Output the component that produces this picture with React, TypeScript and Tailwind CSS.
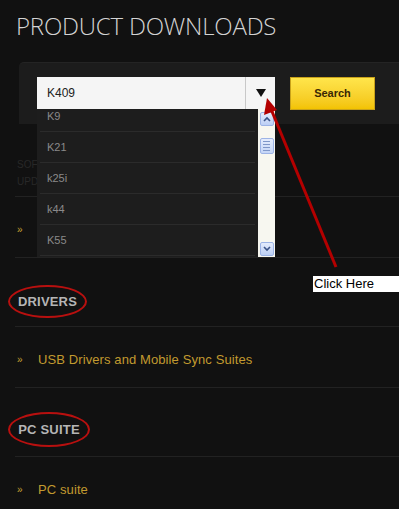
import React from 'react';

const sans = { fontFamily: "'Liberation Sans', Arial, sans-serif" };

const Chevron: React.FC<{ up?: boolean }> = ({ up }) => (
  <div className="w-[14px] h-[14px] rounded-[2px] border border-[#9db4e6] bg-gradient-to-b from-[#e4ecfc] to-[#bccff5] flex items-center justify-center">
    <svg width="8" height="6" viewBox="0 0 8 6">
      <path d={up ? 'M1 5 L4 2 L7 5' : 'M1 1 L4 4 L7 1'} fill="none" stroke="#3b5488" strokeWidth="1.6" />
    </svg>
  </div>
);

const ItemRow: React.FC<{ label?: string; last?: boolean }> = ({ label, last }) => (
  <div className={`h-[61px] pt-[5px] flex items-center ${last ? '' : 'border-b border-[#222222]'}`}>
    <span className="w-[23px] pl-[2px] text-[10px] leading-none text-[#c8a033]" style={sans}>»</span>
    {label && (
      <span className="text-[13px] tracking-[0.1px] text-[#c29a2f]" style={sans}>{label}</span>
    )}
  </div>
);

const Heading: React.FC<{ label: string; w: string; h: string; pt: string }> = ({ label, w, h, pt }) => (
  <div className={`h-[69px] border-b border-[#222222] ${pt}`}>
    <div className={`${w} ${h} -ml-[7px] rounded-[50%] border-2 border-[#b8100f] flex items-center justify-center`}>
      <span className="text-[13px] font-bold tracking-[0.2px] text-[#b5b5b5]" style={sans}>{label}</span>
    </div>
  </div>
);

export default function App() {
  const models = ['K9', 'K21', 'k25i', 'k44', 'K55'];
  return (
    <div className="relative w-[399px] h-[509px] overflow-hidden bg-[#111111]">
      <div className="h-[62px] pl-[16px] pt-[11px]">
        <h1
          className="text-[24px] leading-[30px] font-light tracking-[-0.2px] text-[#d4d4d4]"
          style={{ fontFamily: "'Open Sans', sans-serif" }}
        >
          PRODUCT DOWNLOADS
        </h1>
      </div>

      <div className="relative ml-[19px] h-[62px] rounded-tl-[5px] bg-[#1c1c1c] border-t border-[#242424] pt-[14px] pl-[18px] flex items-start gap-[15px]">
        <div className="w-[238px] h-[32px] bg-[#f5f5f5] flex">
          <div className="flex-1 flex items-center pl-[10px] text-[12px] text-[#222222]" style={sans}>K409</div>
          <div className="w-[30px] border-l border-[#c8c8c8] flex items-center justify-center">
            <svg width="10" height="8" viewBox="0 0 10 8">
              <path d="M0 0 H10 L5 8 Z" fill="#111111" />
            </svg>
          </div>
        </div>
        <button
          className="w-[85px] h-[33px] border border-[#c9a21a] bg-gradient-to-b from-[#ffe54a] to-[#f3c300] text-[11px] font-bold text-[#3a2805]"
          style={sans}
        >
          Search
        </button>

        <div className="absolute left-[18px] top-[46px] w-[238px] h-[148px] flex z-10">
          <div className="flex-1 bg-[#1d1d1d] overflow-hidden">
            <div className="-mt-[8px]">
              {models.map((m) => (
                <div key={m} className="h-[31px] mx-[3px] border-b border-[#2b2b2b] flex items-center pl-[7px] text-[11px] text-[#8a8a8a]" style={sans}>
                  {m}
                </div>
              ))}
            </div>
          </div>
          <div className="w-[17px] bg-[#f7f7f0] flex flex-col items-center pt-[3px] pb-[1px]">
            <Chevron up />
            <div className="mt-[12px] w-[14px] h-[16px] rounded-[2px] border border-[#9db4e6] bg-gradient-to-b from-[#e4ecfc] to-[#c4d5f6] flex flex-col items-center justify-center gap-[2px]">
              <div className="w-[7px] h-px bg-[#7f97c8]" />
              <div className="w-[7px] h-px bg-[#7f97c8]" />
              <div className="w-[7px] h-px bg-[#7f97c8]" />
              <div className="w-[7px] h-px bg-[#7f97c8]" />
            </div>
            <div className="flex-1" />
            <Chevron />
          </div>
        </div>
      </div>

      <div className="pl-[15px]">
        <div className="h-[73px] border-b border-[#222222] pl-[2px] pt-[32px] text-[10px] leading-[17px] text-[#282828]" style={sans}>
          <div>SOFT</div>
          <div>UPD</div>
        </div>
        <ItemRow />
        <Heading label="DRIVERS" w="w-[79px]" h="h-[33px]" pt="pt-[27px]" />
        <ItemRow label="USB Drivers and Mobile Sync Suites" />
        <Heading label="PC SUITE" w="w-[82px]" h="h-[35px]" pt="pt-[24px]" />
        <ItemRow label="PC suite" last />
      </div>

      <svg className="absolute left-0 top-0 pointer-events-none z-20" width="399" height="509">
        <line x1="336" y1="267" x2="271" y2="109" stroke="#b40000" strokeWidth="3" />
        <path d="M267 98 L264 115 L277 110 Z" fill="#b40000" />
      </svg>

      <div
        className="absolute left-[313px] top-[276px] w-[86px] h-[16px] bg-white pl-[1px] text-[13px] leading-[16px] text-black z-20"
        style={sans}
      >
        Click Here
      </div>
    </div>
  );
}
